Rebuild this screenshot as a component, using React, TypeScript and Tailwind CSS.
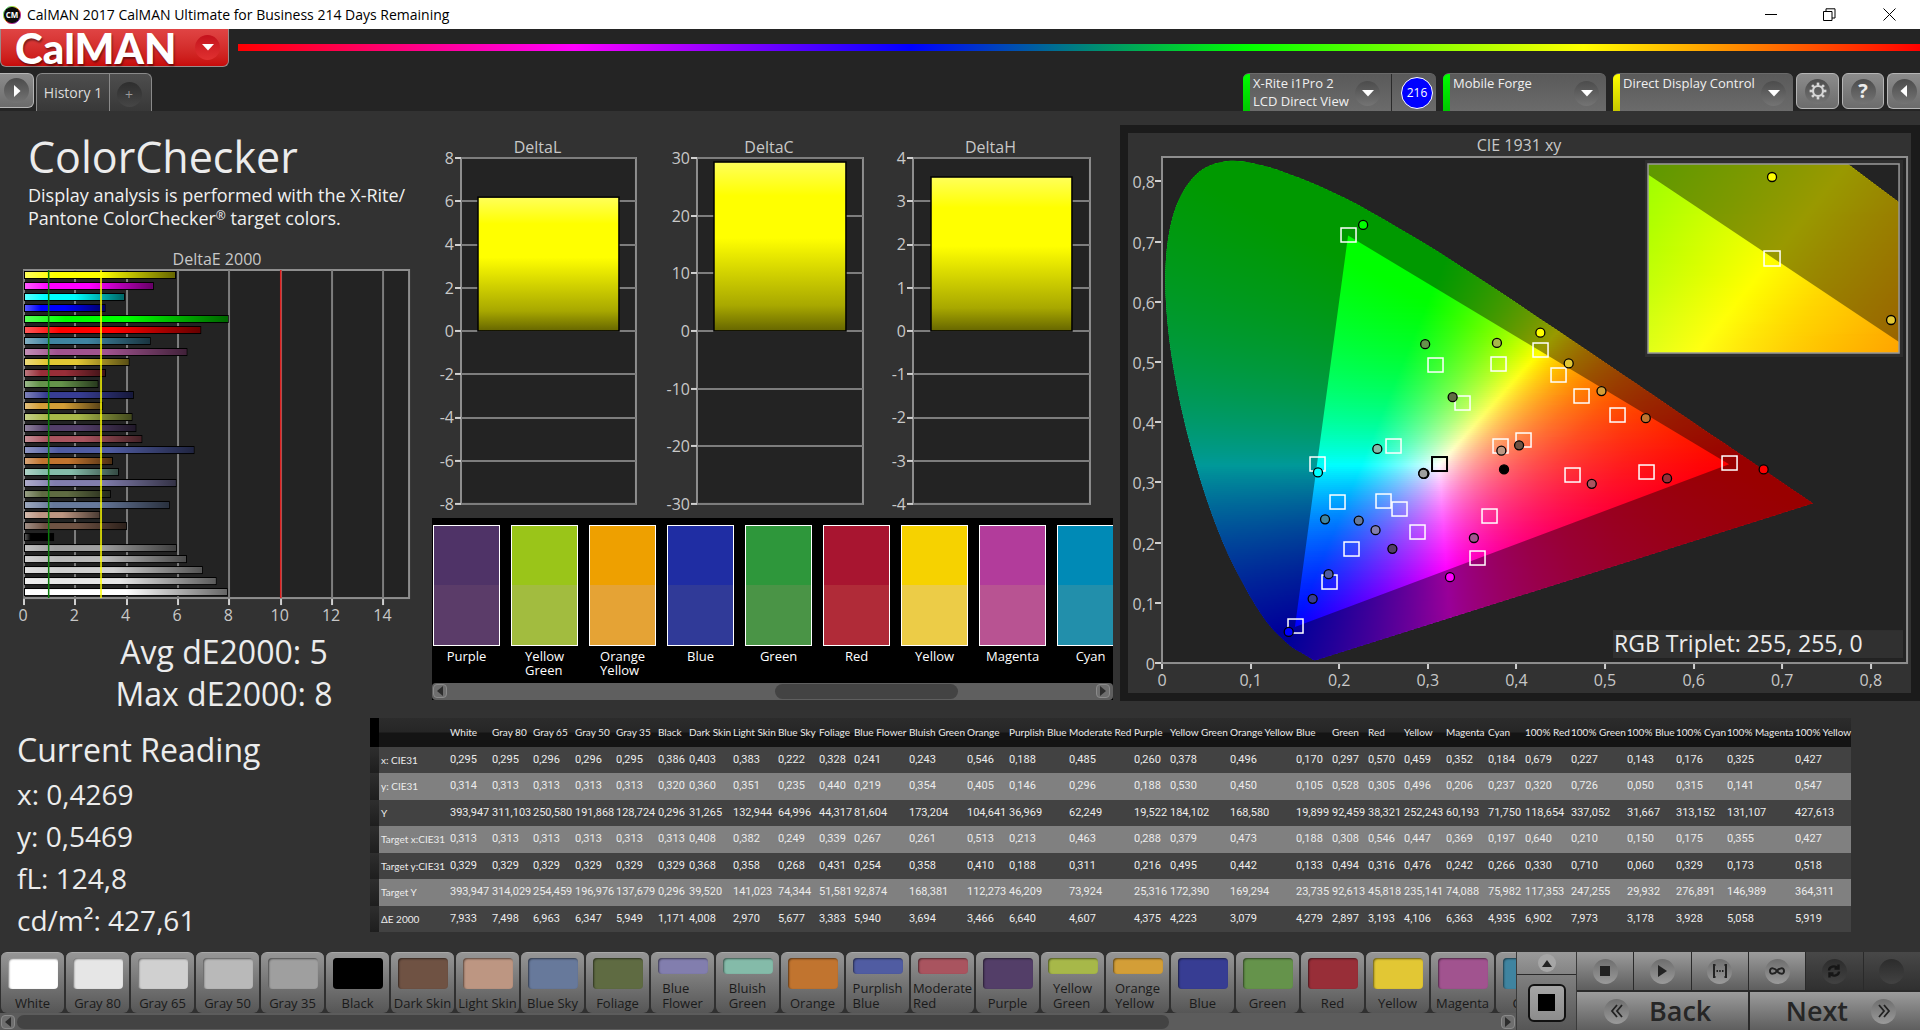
import { ReactNode } from "react";

type Patch = { name: string; lines?: string[]; color: string; m: [string, string, string]; t: [string, string, string]; de: string };

const p = (name: string, color: string, m: string, t: string, de: string, lines?: string[]): Patch => ({
  name,
  color,
  m: m.split(" ") as [string, string, string],
  t: t.split(" ") as [string, string, string],
  de,
  lines,
});

const PATCHES: Patch[] = [
  p("White", "#ffffff", "0,295 0,314 393,947", "0,313 0,329 393,947", "7,933"),
  p("Gray 80", "#e6e6e6", "0,295 0,313 311,103", "0,313 0,329 314,029", "7,498"),
  p("Gray 65", "#d0d0d0", "0,296 0,313 250,580", "0,313 0,329 254,459", "6,963"),
  p("Gray 50", "#b9b9b9", "0,296 0,313 191,868", "0,313 0,329 196,976", "6,347"),
  p("Gray 35", "#9f9f9f", "0,295 0,313 128,724", "0,313 0,329 137,679", "5,949"),
  p("Black", "#000000", "0,386 0,320 0,296", "0,313 0,329 0,296", "1,171"),
  p("Dark Skin", "#6f5243", "0,403 0,360 31,265", "0,408 0,368 39,520", "4,008"),
  p("Light Skin", "#bd9682", "0,383 0,351 132,944", "0,382 0,358 141,023", "2,970"),
  p("Blue Sky", "#67799b", "0,222 0,235 64,996", "0,249 0,268 74,344", "5,677"),
  p("Foliage", "#5f6b42", "0,328 0,440 44,317", "0,339 0,431 51,581", "3,383"),
  p("Blue Flower", "#827eae", "0,241 0,219 81,604", "0,267 0,254 92,874", "5,940", ["Blue", "Flower"]),
  p("Bluish Green", "#84bba9", "0,243 0,354 173,204", "0,261 0,358 168,381", "3,694", ["Bluish", "Green"]),
  p("Orange", "#c1742f", "0,546 0,405 104,641", "0,513 0,410 112,273", "3,466"),
  p("Purplish Blue", "#505ca2", "0,188 0,146 36,969", "0,213 0,188 46,209", "6,640", ["Purplish", "Blue"]),
  p("Moderate Red", "#a9545f", "0,485 0,296 62,249", "0,463 0,311 73,924", "4,607", ["Moderate", "Red"]),
  p("Purple", "#533e68", "0,260 0,188 19,522", "0,288 0,216 25,316", "4,375"),
  p("Yellow Green", "#a7b849", "0,378 0,530 184,102", "0,379 0,495 172,390", "4,223", ["Yellow", "Green"]),
  p("Orange Yellow", "#d39e37", "0,496 0,450 168,580", "0,473 0,442 169,294", "3,079", ["Orange", "Yellow"]),
  p("Blue", "#373d93", "0,170 0,105 19,899", "0,188 0,133 23,735", "4,279"),
  p("Green", "#65934b", "0,297 0,528 92,459", "0,308 0,494 92,613", "2,897"),
  p("Red", "#982e38", "0,570 0,305 38,321", "0,546 0,316 45,818", "3,193"),
  p("Yellow", "#e2c734", "0,459 0,496 252,243", "0,447 0,476 235,141", "4,106"),
  p("Magenta", "#a1538f", "0,352 0,206 60,193", "0,369 0,242 74,088", "6,363"),
  p("Cyan", "#3f84a0", "0,184 0,237 71,750", "0,197 0,266 75,982", "4,935"),
  p("100% Red", "#ff0000", "0,679 0,320 118,654", "0,640 0,330 117,353", "6,902"),
  p("100% Green", "#00ff00", "0,227 0,726 337,052", "0,210 0,710 247,255", "7,973"),
  p("100% Blue", "#0000ff", "0,143 0,050 31,667", "0,150 0,060 29,932", "3,178"),
  p("100% Cyan", "#00ffff", "0,176 0,315 313,152", "0,175 0,329 276,891", "3,928"),
  p("100% Magenta", "#ff00ff", "0,325 0,141 131,107", "0,355 0,173 146,989", "5,058"),
  p("100% Yellow", "#ffff00", "0,427 0,547 427,613", "0,427 0,518 364,311", "5,919"),
];

const num = (s: string) => parseFloat(s.replace(",", "."));

/* ---------- title bar and header ---------- */

function TitleBar() {
  return (
    <div className="flex h-[29px] items-center bg-white text-black">
      <svg width="20" height="20" viewBox="0 0 20 20" className="ml-[2px]">
        <defs>
          <linearGradient id="ring" x1="0" y1="0" x2="1" y2="1">
            <stop offset="0" stopColor="#20d0a0" />
            <stop offset="0.4" stopColor="#e0e020" />
            <stop offset="0.6" stopColor="#ff3050" />
            <stop offset="1" stopColor="#4030ff" />
          </linearGradient>
        </defs>
        <circle cx="10" cy="10" r="8.6" fill="#0b0b0b" stroke="url(#ring)" strokeWidth="1" />
        <text x="10" y="13" fontSize="8" fontWeight="700" fill="#fff" textAnchor="middle">CM</text>
      </svg>
      <span className="ml-[5px] text-[14px]">CalMAN 2017 CalMAN Ultimate for Business 214 Days Remaining</span>
      <div className="ml-auto flex">
        <button aria-label="Minimize" className="flex h-[29px] w-[58px] items-center justify-center">
          <svg width="12" height="12" viewBox="0 0 12 12"><path d="M0 5.5h12" stroke="#000" /></svg>
        </button>
        <button aria-label="Restore" className="flex h-[29px] w-[58px] items-center justify-center">
          <svg width="13" height="13" viewBox="0 0 13 13" fill="none" stroke="#000">
            <path d="M.5 3.500h8.500v9H.5zM3 3.500V.8h9v9.200H9" />
          </svg>
        </button>
        <button aria-label="Close" className="flex h-[29px] w-[62px] items-center justify-center">
          <svg width="13" height="13" viewBox="0 0 13 13"><path d="M.5 .5l12 12M12.500 .5l-12 12" stroke="#000" /></svg>
        </button>
      </div>
    </div>
  );
}

function Disc({ children, className = "from-[#4c4c4c] to-[#747474]" }: { children?: ReactNode; className?: string }) {
  return (
    <span className={`flex h-[25px] w-[25px] shrink-0 items-center justify-center rounded-full bg-linear-to-b ${className}`}>
      {children}
    </span>
  );
}

const Down = () => (
  <svg width="12" height="7" viewBox="0 0 12 7"><path d="M0 0h12L6 6.500z" fill="#fff" /></svg>
);

function DeviceTab({ bar, lines, className, children }: { bar: string; lines: string[]; className: string; children?: ReactNode }) {
  return (
    <div className={`flex h-[38px] overflow-hidden rounded-t-md border-t border-[#6a6a6a] bg-linear-to-b from-[#5a5a5a] to-[#6b6b6b] ${className}`}>
      <button className="flex min-w-0 flex-1 text-left">
        <span className={`h-full w-[7px] shrink-0 ${bar}`} />
        <span className="min-w-0 flex-1 pl-[3px] text-[13px] leading-[18px] whitespace-nowrap text-[#f0f0f0]">
          {lines.map((l) => (
            <span key={l} className="block">{l}</span>
          ))}
        </span>
        <span className={`mt-[7px] ${children ? "mr-[11px]" : "mr-[7px]"}`}>
          <Disc><Down /></Disc>
        </span>
      </button>
      {children}
    </div>
  );
}

const squareBtn =
  "flex h-[36px] items-center justify-center rounded-md border border-[#b5b5b5] bg-linear-to-b from-[#8c8c8c] to-[#6c6c6c]";

function Header() {
  return (
    <header className="h-[82px] bg-[#242424]">
      <div className="flex h-[44px] items-start">
        <button className="flex h-[38px] w-[229px] items-center rounded-b-md border-x border-b border-[#9a8a8a] bg-linear-to-b from-[#e04444] to-[#c80a0a]">
          <span className="flex-1 pl-[14px] text-left font-[Lato] text-[42px] leading-[34px] font-black text-white [text-shadow:1px_2px_2px_#0007]">
            CalMAN
          </span>
          <span className="mr-[8px]">
            <Disc className="from-[#c4101c] to-[#e03030]"><Down /></Disc>
          </span>
        </button>
        <div className="mt-[15px] ml-[9px] h-[7px] flex-1 bg-[linear-gradient(90deg,#f00,#f0f_20%,#00f_40%,#0f0_60%,#ff0_80%,#f00)]" />
      </div>
      <div className="flex h-[38px] items-start">
        <button aria-label="Expand" className="flex h-[35px] w-[34px] items-center justify-center rounded-r-md border border-l-0 border-[#b5b5b5] bg-linear-to-b from-[#8c8c8c] to-[#6c6c6c]">
          <Disc>
            <svg width="8" height="12" viewBox="0 0 8 12"><path d="M1 0v12l6.500-6z" fill="#fff" /></svg>
          </Disc>
        </button>
        <div className="ml-[2px] flex h-[38px] rounded-t-md border border-b-0 border-[#8a8a8a] bg-linear-to-b from-[#4e4e4e] to-[#383838]">
          <button className="w-[73px] border-r border-[#8a8a8a] text-[14px] text-[#dcdcdc]">History 1</button>
          <button aria-label="Add tab" className="flex w-[41px] items-center justify-center pr-[3px] text-[14px] text-[#9a9a9a]">
            <Disc className="mt-[4px] from-[#2e2e2e] to-[#464646]">+</Disc>
          </button>
        </div>
        <div className="ml-auto flex items-start">
          <DeviceTab bar="bg-linear-to-b from-[#00ff00] to-[#00c800]" lines={["X-Rite i1Pro 2", "LCD Direct View"]} className="w-[193px]">
            <div className="flex w-[45px] items-center justify-center border-l border-[#2a2a2a] pl-[6px]">
              <span className="flex h-[32px] w-[32px] items-center justify-center rounded-full border border-white bg-[#0000ff] text-[12px] text-white">216</span>
            </div>
          </DeviceTab>
          <DeviceTab bar="bg-linear-to-b from-[#00ff00] to-[#00c800]" lines={["Mobile Forge"]} className="ml-[7px] w-[163px]" />
          <DeviceTab bar="bg-linear-to-b from-[#ffff00] to-[#c8c800]" lines={["Direct Display Control"]} className="ml-[7px] w-[180px]" />
          <button aria-label="Settings" className={`ml-[3px] w-[43px] ${squareBtn}`}>
            <Disc>
              <svg width="18" height="18" viewBox="-9 -9 18 18" fill="none" stroke="#d6d6d6">
                <circle r="5" strokeWidth="2.200" />
                {[0, 45, 90, 135, 180, 225, 270, 315].map((a) => (
                  <path key={a} d="M0-5.500V-8.400" strokeWidth="2.600" transform={`rotate(${a})`} />
                ))}
              </svg>
            </Disc>
          </button>
          <button aria-label="Help" className={`ml-[3px] w-[42px] ${squareBtn}`}>
            <Disc className="from-[#4c4c4c] to-[#747474] text-[20px] font-bold text-[#ececec]">?</Disc>
          </button>
          <button aria-label="Collapse" className="ml-[3px] flex h-[36px] w-[33px] items-center justify-center rounded-l-md border border-r-0 border-[#b5b5b5] bg-linear-to-b from-[#8c8c8c] to-[#6c6c6c]">
            <Disc>
              <svg width="8" height="12" viewBox="0 0 8 12"><path d="M7 0v12L.5 6z" fill="#fff" /></svg>
            </Disc>
          </button>
        </div>
      </div>
    </header>
  );
}

/* ---------- bar charts ---------- */

function DeltaEChart() {
  const X0 = 24;
  const U = 385 / 15;
  const rows = [...PATCHES].reverse();
  return (
    <svg viewBox="0 0 430 378" className="block w-full overflow-visible" fontSize="16" fill="#c8c8c8">
      <defs>
        <linearGradient id="shadeH">
          <stop offset="0" stopColor="#fff" stopOpacity="0.350" />
          <stop offset="0.200" stopColor="#fff" stopOpacity="0" />
          <stop offset="0.500" stopColor="#000" stopOpacity="0" />
          <stop offset="1" stopColor="#000" stopOpacity="0.600" />
        </linearGradient>
      </defs>
      <text x="217" y="18" textAnchor="middle">DeltaE 2000</text>
      <rect x={X0} y="23" width="385" height="328" fill="#232323" stroke="#8e8e8e" strokeWidth="2" />
      {[0, 2, 4, 6, 8, 10, 12, 14].map((v) => (
        <g key={v}>
          <path d={`M${Math.round(X0 + v * U)} 23v328`} stroke="#7d7d7d" strokeWidth="2" />
          <path d={`M${Math.round(X0 + v * U)} 352v6`} stroke="#d0d0d0" strokeWidth="2" />
          <text x={X0 + v * U - 1} y="374" textAnchor="middle">{v}</text>
        </g>
      ))}
      {rows.map((r, i) => {
        const y = Math.round(24 + i * 10.93);
        const w = num(r.de) * U;
        return (
          <g key={r.name}>
            <rect x={X0} y={y} width={w} height="8" fill="#000" />
            <rect x={X0 + 1} y={y + 1} width={w - 2} height="6" fill={r.color} />
            <rect x={X0 + 1} y={y + 1} width={w - 2} height="6" fill="url(#shadeH)" />
          </g>
        );
      })}
      <path d={`M${X0 + U - 1} 23v328`} stroke="#0a7a0a" strokeWidth="1.500" />
      <path d={`M${X0 + 3 * U} 23v328`} stroke="#ffff00" strokeWidth="1.500" />
      <path d={`M${X0 + 10 * U} 23v328`} stroke="#e02020" strokeWidth="1.500" />
    </svg>
  );
}

function DeltaChart({ title, ticks, value, left, width, view, inset }: {
  title: string;
  ticks: number[];
  value: number;
  left: number;
  width: number;
  view: number;
  inset: number;
}) {
  const max = ticks[0];
  const y = (v: number) => 199 - (v / max) * 173;
  return (
    <svg viewBox={`0 0 ${view} 386`} className="block min-w-0 overflow-visible" style={{ flex: `${view} 1 0%` }} fontSize="16" fill="#c8c8c8">
      <defs>
        <linearGradient id={`v${title}`} x2="0" y2="1">
          <stop offset="0" stopColor="#ffff5a" />
          <stop offset="0.200" stopColor="#ffff00" />
          <stop offset="0.450" stopColor="#ffff00" />
          <stop offset="0.850" stopColor="#a8a800" />
          <stop offset="1" stopColor="#666600" />
        </linearGradient>
      </defs>
      <text x={left + width / 2 - 11} y="21" textAnchor="middle">{title}</text>
      <rect x={left} y="26" width={width} height="346" fill="#232323" stroke="#8e8e8e" strokeWidth="2" />
      {ticks.map((t) => (
        <g key={t}>
          <path d={`M${left} ${Math.round(y(t))}h${width}`} stroke="#7d7d7d" strokeWidth="2" />
          <path d={`M${left - 6} ${Math.round(y(t))}h6`} stroke="#d0d0d0" strokeWidth="2" />
          <text x={left - 7} y={y(t) + 6} textAnchor="end">{t}</text>
        </g>
      ))}
      <rect x={left + inset} y={y(value)} width={width - 2 * inset} height={199 - y(value)} fill={`url(#v${title})`} stroke="#000" strokeWidth="1.500" />
    </svg>
  );
}

/* ---------- swatch strip ---------- */

const SWATCHES = [
  { lines: ["Purple"], top: "#4f3367", bottom: "#5b3c69" },
  { lines: ["Yellow", "Green"], top: "#9ac519", bottom: "#a2bc3f" },
  { lines: ["Orange", "Yellow"], top: "#eea000", bottom: "#e5a335" },
  { lines: ["Blue"], top: "#1f2da3", bottom: "#303a98" },
  { lines: ["Green"], top: "#2e973b", bottom: "#4a9446" },
  { lines: ["Red"], top: "#a81530", bottom: "#b02b38" },
  { lines: ["Yellow"], top: "#f6d200", bottom: "#eccc47" },
  { lines: ["Magenta"], top: "#b23c9b", bottom: "#b85392" },
  { lines: ["Cyan"], top: "#008ab6", bottom: "#228fab" },
];

function ScrollButton({ dir }: { dir: "left" | "right" }) {
  return (
    <button aria-label={`Scroll ${dir}`} className="flex h-[14px] w-[14px] shrink-0 items-center justify-center rounded-sm border border-[#8a8a8a] bg-[#6e6e6e]">
      <svg width="6" height="10" viewBox="0 0 6 10">
        <path d={dir === "left" ? "M6 0v10L0 5z" : "M0 0v10l6-5z"} fill="#2c2c2c" />
      </svg>
    </button>
  );
}

function SwatchStrip() {
  return (
    <div className="bg-black">
      <div className="flex h-[165px] gap-[11px] overflow-hidden pt-[7px] pl-px">
        {SWATCHES.map((s, i) => (
          <div key={i} className="flex w-[67px] shrink-0 flex-col items-center">
            <div className="flex h-[121px] w-full flex-col border border-white">
              <div className="flex-1" style={{ background: s.top }} />
              <div className="flex-1" style={{ background: s.bottom }} />
            </div>
            <div className="mt-[3px] text-[13px] leading-[14px] font-medium text-white">
              {s.lines.map((l) => (
                <div key={l}>{l}</div>
              ))}
            </div>
          </div>
        ))}
      </div>
      <div className="flex h-[17px] items-center rounded-sm bg-[#5f5f5f] pr-[3px] pl-px">
        <ScrollButton dir="left" />
        <div className="flex h-full flex-1 items-center">
          <div className="ml-[50.500%] h-[15px] w-[28.200%] rounded-lg bg-[#434343]" />
        </div>
        <ScrollButton dir="right" />
      </div>
    </div>
  );
}

/* ---------- CIE 1931 diagram ---------- */

const OX = 34;
const OY = 530;
const KX = 886;
const KY = 602;
const px = (x: number) => OX + x * KX;
const py = (y: number) => OY - y * KY;

const LOCUS: [number, number][] = [
  [0.1741, 0.005], [0.1714, 0.0051], [0.1644, 0.0109], [0.1566, 0.0177], [0.144, 0.0297], [0.1241, 0.0578],
  [0.1096, 0.0868], [0.0913, 0.1327], [0.0687, 0.2007], [0.0454, 0.295], [0.0235, 0.4127], [0.0082, 0.5384],
  [0.0039, 0.6548], [0.0139, 0.7502], [0.0389, 0.812], [0.0743, 0.8338], [0.1142, 0.8262], [0.1547, 0.8059],
  [0.1929, 0.7816], [0.2296, 0.7543], [0.3016, 0.6923], [0.3731, 0.6245], [0.4441, 0.5547], [0.5125, 0.4866],
  [0.5752, 0.4242], [0.627, 0.3725], [0.6915, 0.3083], [0.719, 0.2809], [0.7347, 0.2653],
];

// Catmull-Rom through the spectral points, closed by the purple line
const locusPath = (() => {
  const q = LOCUS.map(([x, y]) => [px(x), py(y)]);
  let d = `M${q[0][0]} ${q[0][1]}`;
  for (let i = 0; i < q.length - 1; i++) {
    const a = q[Math.max(i - 1, 0)];
    const b = q[i];
    const c = q[i + 1];
    const e = q[Math.min(i + 2, q.length - 1)];
    d += `C${b[0] + (c[0] - a[0]) / 6} ${b[1] + (c[1] - a[1]) / 6} ${c[0] - (e[0] - b[0]) / 6} ${c[1] - (e[1] - b[1]) / 6} ${c[0]} ${c[1]}`;
  }
  return d + "Z";
})();

const gamutPath = `M${px(0.64)} ${py(0.33)}L${px(0.21)} ${py(0.71)}L${px(0.15)} ${py(0.06)}Z`;

// brightest displayable colour at a chromaticity
function colorAt(x: number, y0: number) {
  const y = Math.max(y0, 0.002);
  const X = x / y;
  const Z = (1 - x - y) / y;
  const rgb = [
    3.2406 * X - 1.5372 - 0.4986 * Z,
    -0.9689 * X + 1.8758 + 0.0415 * Z,
    0.0557 * X - 0.204 + 1.057 * Z,
  ].map((v) => Math.max(v, 0));
  const m = Math.max(...rgb) || 1;
  return rgb.map((v) => (v / m) * 255);
}

type Stop = { t: number; c: number[] };

// keep only the samples that a straight blend between neighbours would miss
function thin(s: Stop[]): Stop[] {
  const a = s[0];
  const b = s[s.length - 1];
  let worst = 0;
  let at = 0;
  for (let i = 1; i < s.length - 1; i++) {
    const f = (s[i].t - a.t) / (b.t - a.t);
    const err = Math.max(...s[i].c.map((v, k) => Math.abs(v - (a.c[k] + (b.c[k] - a.c[k]) * f))));
    if (err > worst) {
      worst = err;
      at = i;
    }
  }
  if (worst < 1.5) return [a, b];
  return [...thin(s.slice(0, at + 1)), ...thin(s.slice(at)).slice(1)];
}

type Area = { x: number; y: number; w: number; h: number; row: number };

// paints the chromaticity colours as thin rows, each one a horizontal gradient
function ColorRows({ id, area }: { id: string; area: Area }) {
  const n = Math.ceil(area.h / area.row);
  const samples = 300;
  return (
    <>
      {Array.from({ length: n }, (_, i) => {
        const y = area.y + i * area.row;
        const stops = thin(
          Array.from({ length: samples + 1 }, (_, k) => {
            const t = k / samples;
            return { t, c: colorAt((area.x + area.w * t - OX) / KX, (OY - y - area.row / 2) / KY) };
          }),
        );
        return (
          <g key={i}>
            <linearGradient id={`${id}${i}`}>
              {stops.map((s) => (
                <stop key={s.t} offset={s.t} stopColor={`rgb(${s.c.map(Math.round).join(",")})`} />
              ))}
            </linearGradient>
            <rect x={area.x} y={y} width={area.w} height={area.row * 1.5} fill={`url(#${id}${i})`} />
          </g>
        );
      })}
      <path d={`M0 0H783V560H0Z${gamutPath}`} fillRule="evenodd" fill="#000" fillOpacity="0.400" />
    </>
  );
}

const mark = (v: [string, string, string]) => [px(num(v[0])), py(num(v[1])) - 1];

function CieChart() {
  const zx = 4.2;
  const zy = 4.67;
  const cx = 644;
  const cy = 125;
  const fx = px(0.427);
  const fy = py(0.518);
  const yellow = PATCHES[21];
  const zoomArea = { x: fx - (cx - 520) / zx, y: fy - (cy - 31) / zy, w: 251 / zx, h: 189 / zy, row: 2 / zy };
  return (
    <svg viewBox="0 0 783 560" className="block w-full bg-[#323232]" fontSize="16" fill="#c8c8c8">
      <defs>
        <clipPath id="locus"><path d={locusPath} /></clipPath>
        <clipPath id="zoomBox"><rect x="520" y="31" width="251" height="189" /></clipPath>
      </defs>
      <text x="391" y="18" textAnchor="middle">CIE 1931 xy</text>
      <rect x="34" y="24" width="745" height="506" fill="#232323" stroke="#8e8e8e" strokeWidth="2" />
      {[0, 1, 2, 3, 4, 5, 6, 7, 8].map((t) => (
        <g key={t}>
          <path d={`M${OX - 7} ${Math.round(py(t / 10))}h6M${Math.round(px(t / 10))} ${OY + 1}v5`} stroke="#d0d0d0" strokeWidth="2" />
          <text x={OX - 7} y={py(t / 10) + 7} textAnchor="end">{t ? `0,${t}` : "0"}</text>
          <text x={px(t / 10)} y="553" textAnchor="middle">{t ? `0,${t}` : "0"}</text>
        </g>
      ))}
      <g clipPath="url(#locus)">
        <ColorRows id="r" area={{ x: 34, y: 24, w: 660, h: 506, row: 2 }} />
      </g>
      {PATCHES.slice(5).map((c) => {
        const [x, y] = mark(c.t);
        return <rect key={c.name} x={Math.round(x) - 7} y={Math.round(y) - 7} width="15" height="14" fill="none" stroke={c.name === "Black" ? "#000" : "#fff"} strokeWidth={c.name === "Black" ? 2 : 1.5} />;
      })}
      {PATCHES.map((c) => {
        const [x, y] = mark(c.m);
        return <circle key={c.name} cx={x} cy={y} r="4.500" fill={c.color} stroke="#000" strokeWidth="1.300" />;
      })}
      <rect x="517" y="27" width="258" height="197" fill="#2e2e2e" />
      <rect x="520" y="31" width="251" height="189" fill="#232323" />
      <g clipPath="url(#zoomBox)">
        <g transform={`translate(${cx - fx * zx} ${cy - fy * zy}) scale(${zx} ${zy})`}>
          <g clipPath="url(#locus)">
            <ColorRows id="z" area={zoomArea} />
          </g>
        </g>
      </g>
      <rect x="520" y="31" width="251" height="189" fill="none" stroke="#9a9a9a" strokeWidth="1.500" />
      <rect x={cx - 8} y={cy - 7} width="16" height="15" fill="none" stroke="#fff" strokeWidth="1.500" />
      <circle cx={cx} cy="44" r="4.500" fill="#ffff00" stroke="#000" strokeWidth="1.300" />
      <circle cx="763" cy="187" r="4.500" fill={yellow.color} stroke="#000" strokeWidth="1.300" />
      <rect x="485" y="497" width="290" height="28" fill="#303030" />
      <text x="486" y="519" fontSize="23" fill="#ececec">RGB Triplet: 255, 255, 0</text>
    </svg>
  );
}

/* ---------- readings and table ---------- */

const COLS = [42, 41, 42, 41, 42, 31, 44, 45, 41, 35, 55, 58, 42, 60, 65, 36, 60, 66, 36, 36, 36, 42, 42, 37, 46, 56, 49, 51, 68, 57];

const ROWS: [string, (c: Patch) => string][] = [
  ["x: CIE31", (c) => c.m[0]],
  ["y: CIE31", (c) => c.m[1]],
  ["Y", (c) => c.m[2]],
  ["Target x:CIE31", (c) => c.t[0]],
  ["Target y:CIE31", (c) => c.t[1]],
  ["Target Y", (c) => c.t[2]],
  ["ΔE 2000", (c) => c.de],
];

function DataTable() {
  return (
    <table className="w-[calc(100%-69px)] table-fixed border-collapse text-left font-[Roboto] text-[11px] whitespace-nowrap text-[#ececec]">
      <colgroup>
        <col className="w-[9px]" />
        <col className="w-[70px]" />
        {COLS.map((w, i) => (
          <col key={i} style={{ width: w }} />
        ))}
      </colgroup>
      <thead>
        <tr className="h-[29px] bg-[linear-gradient(#2c2c2c,#262626_48%,#141414_52%,#141414)]">
          <td className="bg-black p-0" />
          <td className="p-0" />
          {PATCHES.map((c) => (
            <th key={c.name} scope="col" className="p-0 pl-px font-[Lato] text-[10px] font-normal">{c.name}</th>
          ))}
        </tr>
      </thead>
      <tbody>
        {ROWS.map(([label, get]) => (
          <tr key={label} className="odd:h-[26px] odd:bg-[#424242] even:h-[27px] even:bg-[#808080]">
            <td className="bg-linear-to-b from-[#2e2e2e] to-[#1e1e1e] p-0" />
            <th scope="row" className="p-0 pl-[2px] font-[Lato] text-[10px] font-normal">{label}</th>
            {PATCHES.map((c) => (
              <td key={c.name} className="p-0 pl-px">{get(c)}</td>
            ))}
          </tr>
        ))}
      </tbody>
    </table>
  );
}

/* ---------- footer ---------- */

function PatchBar() {
  return (
    <div className="flex min-w-0 flex-1 flex-col bg-[#303030]">
      <div className="flex h-[61px] gap-[2px] overflow-hidden pl-px">
        {PATCHES.slice(0, 24).map((c) => (
          <button
            key={c.name}
            className="flex h-[61px] w-[63px] shrink-0 flex-col items-center justify-between rounded-md border-t border-[#a8a8a8] bg-linear-to-b from-[#969696] to-[#565656] pt-[5px] pb-[2px]"
          >
            <span
              className={`w-[50px] rounded-[4px] shadow-[inset_1px_1px_2px_#0008] ${c.lines ? "h-[16px]" : "h-[31px]"}`}
              style={{ background: c.color }}
            />
            <span className="text-left text-[13px] leading-[15px] whitespace-nowrap text-[#1a1a1a]">
              {(c.lines ?? [c.name]).map((l) => (
                <span key={l} className="block">{l}</span>
              ))}
            </span>
          </button>
        ))}
      </div>
      <div className="flex h-[17px] items-center bg-[#5c5c5c] px-px">
        <ScrollButton dir="left" />
        <div className="flex h-full flex-1 items-center">
          <div className="ml-[2px] h-[14px] w-[77.500%] rounded-lg bg-[#434343]" />
        </div>
        <ScrollButton dir="right" />
      </div>
    </div>
  );
}

const metal = "bg-linear-to-b from-[#9c9c9c] to-[#5e5e5e]";
const rim = "from-[#6e6e6e] to-[#9a9a9a]";

const TRANSPORT: { label: string; icon: ReactNode; off?: boolean }[] = [
  { label: "Stop", icon: <path d="M3 3h10v10H3z" fill="#222" /> },
  { label: "Play", icon: <path d="M4 2v12l9-6z" fill="#222" /> },
  { label: "Step", icon: <path d="M3.500 2H2v12h1.500M12.500 2H14v12h-1.500M4.500 8h1.500M7.200 8h1.500M10 8h1.500" fill="none" stroke="#222" strokeWidth="2" /> },
  { label: "Loop", icon: <path d="M8 8C6.500 5.500 1 3.500 1 8s5.500 2.500 7 0 7-4.500 7 0-5.500 2.500-7 0z" fill="none" stroke="#222" strokeWidth="2" /> },
  { label: "Refresh", off: true, icon: <path d="M3 7.500C3 3.500 9 2 11.500 5M13 8.500c0 4-6 5.500-8.500 2.500M12.500 1.500v4h-4M3.500 14.500v-4h4" fill="none" stroke="#161616" strokeWidth="2.400" /> },
  { label: "Record", off: true, icon: null },
];

function Transport() {
  return (
    <div className="flex w-[404px] shrink-0 bg-[#2a2a2a]">
      <div className="flex w-[61px] flex-col gap-px border-x border-[#3a3a3a]">
        <button aria-label="Scroll up" className="flex h-[22px] items-center justify-center bg-linear-to-b from-[#9a9a9a] to-[#848484]">
          <span className="flex h-[18px] w-[18px] items-center justify-center rounded-full bg-[#a6a6a6]">
            <svg width="10" height="7" viewBox="0 0 10 7"><path d="M5 0l5 7H0z" fill="#222" /></svg>
          </span>
        </button>
        <button aria-label="Pattern window" className="flex flex-1 items-center justify-center bg-linear-to-b from-[#808080] to-[#565656]">
          <span className="flex h-[38px] w-[38px] items-center justify-center rounded-md border-2 border-[#111] bg-linear-to-b from-[#a6a6a6] to-[#8c8c8c]">
            <span className="h-[17px] w-[17px] bg-black" />
          </span>
        </button>
      </div>
      <div className="flex flex-1 flex-col gap-[2px]">
        <div className="grid h-[38px] grid-cols-6 gap-px">
          {TRANSPORT.map((t) => (
            <button key={t.label} aria-label={t.label} disabled={t.off} className={`flex items-center justify-center ${t.off ? "bg-linear-to-b from-[#484848] to-[#303030]" : metal}`}>
              <Disc className={t.off ? "from-[#2c2c2c] to-[#424242]" : rim}>
                <svg width="16" height="16" viewBox="0 0 16 16">{t.icon}</svg>
              </Disc>
            </button>
          ))}
        </div>
        <div className="grid flex-1 grid-cols-2 gap-[2px] text-[27px] leading-[30px] font-semibold text-[#262626]">
          <button className={`flex items-center gap-[20px] pl-[27px] ${metal}`}>
            <Disc className={rim}>
              <svg width="14" height="14" viewBox="0 0 14 14" fill="none" stroke="#222" strokeWidth="1.800"><path d="M7 1L2 7l5 6M12 1L7 7l5 6" /></svg>
            </Disc>
            Back
          </button>
          <button className={`flex items-center justify-end gap-[23px] pr-[24px] ${metal}`}>
            Next
            <Disc className={rim}>
              <svg width="14" height="14" viewBox="0 0 14 14" fill="none" stroke="#222" strokeWidth="1.800"><path d="M2 1l5 6-5 6M7 1l5 6-5 6" /></svg>
            </Disc>
          </button>
        </div>
      </div>
    </div>
  );
}

export default function App() {
  return (
    <div className="flex min-h-screen flex-col bg-[#323232] font-['Open_Sans','Noto_Sans',sans-serif] text-[#ececec]">
      <TitleBar />
      <Header />
      <main className="flex-1">
        <div className="flex items-start">
          <section className="w-[22.400%] shrink-0">
            <h1 className="mt-[19px] ml-[28px] text-[43px] leading-[54px]">ColorChecker</h1>
            <p className="ml-[28px] text-[18px] leading-[23px] whitespace-nowrap text-[#f0f0f0]">
              Display analysis is performed with the X-Rite/
              <br />
              Pantone ColorChecker<span className="align-[5px] text-[12px] leading-none">®</span> target colors.
            </p>
            <div className="mt-[17px]"><DeltaEChart /></div>
            <div className="mt-[6px] pl-[18px] text-center text-[32px] leading-[42px]">
              <p>Avg dE2000: 5</p>
              <p>Max dE2000: 8</p>
            </div>
          </section>
          <section className="min-w-0 flex-1 pl-[2px]">
            <div className="mt-[21px] flex">
              <DeltaChart title="DeltaL" ticks={[8, 6, 4, 2, 0, -2, -4, -6, -8]} value={6.19} left={29} width={175} view={215} inset={17} />
              <DeltaChart title="DeltaC" ticks={[30, 20, 10, 0, -10, -20, -30]} value={29.3} left={50} width={166} view={235} inset={17} />
              <DeltaChart title="DeltaH" ticks={[4, 3, 2, 1, 0, -1, -2, -3, -4]} value={3.56} left={31} width={177} view={231} inset={18} />
            </div>
            <SwatchStrip />
          </section>
          <section className="mt-[14px] ml-[7px] w-[41.670%] shrink-0 bg-[#1b1b1b] py-[8px] pr-[9px] pl-[8px]">
            <CieChart />
          </section>
        </div>
        <div className="flex items-start">
          <section className="w-[370px] shrink-0 pl-[17px]">
            <h2 className="mt-[12px] text-[32px] leading-[46px]">Current Reading</h2>
            <dl className="text-[28px] leading-[42px]">
              <div>x: 0,4269</div>
              <div>y: 0,5469</div>
              <div>fL: 124,8</div>
              <div>cd/m²: 427,61</div>
            </dl>
          </section>
          <div className="min-w-0 flex-1 pt-[3px]">
            <DataTable />
          </div>
        </div>
      </main>
      <footer className="flex h-[78px]">
        <PatchBar />
        <Transport />
      </footer>
    </div>
  );
}
